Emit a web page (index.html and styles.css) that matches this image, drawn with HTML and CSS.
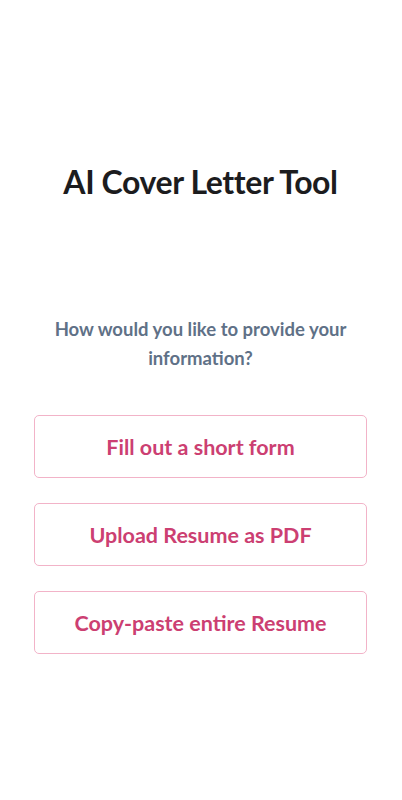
FILE: index.html
```html
<!DOCTYPE html>
<html>
<head>
    <title>AI Cover Letter Tool</title>
    <link rel="stylesheet" href="styles.css">
</head>
<body>
    <div class="container">
        <h1>AI Cover Letter Tool</h1>

        <p class="question">How would you like to provide your information?</p>

        <div class="options">
            <button type="button" class="option">Fill out a short form</button>
            <button type="button" class="option">Upload Resume as PDF</button>
            <button type="button" class="option">Copy-paste entire Resume</button>
        </div>
    </div>
</body>
</html>
```

FILE: styles.css
```css
:root {
    --foreground: #1c1c1e;
    --muted: #5f7187;
    --primary: #cc3f72;
    --border: #f2b3c8;
    --radius: 5px;
}

body {
    margin: 0;
    background-color: #ffffff;
    font-family: Lato, "Open Sans", sans-serif;
    color: var(--foreground);
}

.container {
    padding: 0 35px 0 34px;
}

h1 {
    margin: 0;
    padding-top: 160px;
    font-size: 32px;
    line-height: 44px;
    font-weight: 700;
    text-align: center;
    letter-spacing: -0.4px;
}

.question {
    margin: 111px 0 0;
    color: var(--muted);
    font-size: 18.5px;
    line-height: 29px;
    font-weight: 700;
    text-align: center;
}

.options {
    display: flex;
    flex-direction: column;
    gap: 25px;
    margin-top: 42px;
}

.option {
    height: 63px;
    background-color: #ffffff;
    border: 1px solid var(--border);
    border-radius: var(--radius);
    color: var(--primary);
    font-family: inherit;
    font-size: 21.5px;
    font-weight: 700;
    cursor: pointer;
}
```
